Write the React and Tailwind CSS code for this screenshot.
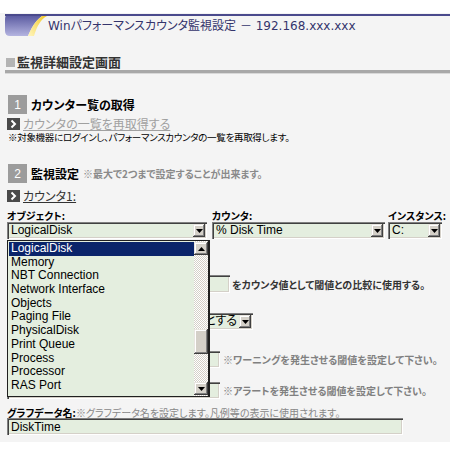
import React from 'react';

const jp = "font-['Noto_Sans_CJK_JP',sans-serif] [font-feature-settings:'palt']";
const latin = "font-['Liberation_Sans','Noto_Sans_CJK_JP',sans-serif] [font-feature-settings:'palt']";
const inset = 'bg-[#e4eedf] shadow-[inset_1px_1px_#808080,inset_2px_2px_#404040,inset_-1px_-1px_#ffffff,inset_-2px_-2px_#d4d0c8]';
const raised = 'bg-[#d4d0c8] shadow-[inset_-1px_-1px_#404040,inset_1px_1px_#e8e6e0,inset_-2px_-2px_#808080,inset_2px_2px_#ffffff]';

const objects = [
    'LogicalDisk', 'Memory', 'NBT Connection', 'Network Interface', 'Objects', 'Paging File',
    'PhysicalDisk', 'Print Queue', 'Process', 'Processor', 'RAS Port',
];

const Arrow = ({ up = false }) => (
    <svg width="7" height="4" viewBox="0 0 7 4">
        <path d={up ? 'M0 4h7L3.5 0z' : 'M0 0h7L3.5 4z'} fill="#000" />
    </svg>
);

const Select = ({ value, className, alignEnd = false }) => (
    <div className={`flex h-[17px] items-stretch p-[2px] ${inset} ${className}`}>
        <span
            className={`flex-1 overflow-hidden whitespace-nowrap pl-[2px] text-[12px] leading-[13px] text-black ${latin} ${alignEnd ? 'pr-[2px] text-right' : ''}`}
        >
            {value}
        </span>
        <span className={`flex w-[12px] items-center justify-center ${raised}`}>
            <Arrow />
        </span>
    </div>
);

const Field = ({ value, className }) => (
    <div className={`h-[17px] px-[4px] pt-[2px] text-[12px] leading-[14px] text-black ${inset} ${latin} ${className}`}>{value}</div>
);

const LinkIcon = () => (
    <svg width="13" height="12" viewBox="0 0 13 12" className="shrink-0">
        <rect width="13" height="12" fill="#4a4a4a" />
        <path d="M4.5 2.5 8 6l-3.5 3.5" stroke="#fff" strokeWidth="2" fill="none" />
    </svg>
);

const StepBox = ({ n }) => (
    <span className="flex h-[19px] w-[19px] items-center justify-center bg-[#9c9c9c] font-['Liberation_Sans',sans-serif] text-[12px] text-white">{n}</span>
);

const Logo = () => (
    <svg width="42" height="22" viewBox="0 0 42 22" className="shrink-0">
        <defs>
            <linearGradient id="lg-body" x1="0" y1="0" x2="0" y2="1">
                <stop offset="0" stopColor="#54549c" />
                <stop offset="1" stopColor="#b4b4e0" />
            </linearGradient>
            <linearGradient id="lg-swoosh" x1="0" y1="1" x2="1" y2="0">
                <stop offset="0" stopColor="#fff6c0" />
                <stop offset="1" stopColor="#f2c61e" />
            </linearGradient>
        </defs>
        <path d="M5 0H42C34 2 28 10 23 22H5Q0 22 0 17V5Q0 0 5 0Z" fill="url(#lg-body)" />
        <path d="M42 0C34 2 28 10 23 22H29C32 12 36 5 42 2Z" fill="url(#lg-swoosh)" />
        <rect width="42" height="2" fill="#4a4a8c" />
    </svg>
);

export default function App() {
    return (
        <div className="relative min-h-[460px] bg-white pt-[13px]">
            <div className="bg-[#f4f4f4] pb-[7px]">
                <header className="flex pl-[5px] pt-[1px]">
                    <Logo />
                    <div className="flex h-[22px] flex-1 items-center border-t-2 border-[#4a4a8c] pl-[1px]">
                        <h1 className="font-['DejaVu_Sans','Noto_Sans_CJK_JP',sans-serif] text-[12px] text-[#34346c] [font-feature-settings:'palt']">
                            Winパフォーマンスカウンタ監視設定 － 192.168.xxx.xxx
                        </h1>
                    </div>
                </header>

                <div className="mt-[18px] flex h-[16px] items-center pl-[6px]">
                    <span className="mr-[2px] h-[9px] w-[9px] bg-[#b4b4b4]" />
                    <h2 className={`text-[13px] font-bold text-[#333] ${jp}`}>監視詳細設定画面</h2>
                </div>
                <div className="ml-[5px] h-[4px] border-t-[3px] border-[#a8a8a8] bg-[#d8d8d8]" />

                <section className="mt-[21px] pl-[8px]">
                    <div className="flex items-center gap-[4px]">
                        <StepBox n="1" />
                        <h3 className={`text-[12px] font-bold text-black ${jp}`}>カウンター覧の取得</h3>
                    </div>
                    <div className="-ml-[1px] mt-[2px] flex h-[15px] items-center gap-[3px]">
                        <LinkIcon />
                        <span className={`text-[12px] leading-[14px] text-[#a0a0a0] underline ${jp}`}>カウンタの一覧を再取得する</span>
                    </div>
                    <p className={`h-[12px] text-[9.5px] leading-[12px] tracking-[-0.3px] text-black ${jp}`}>
                        ※対象機器にログインし、パフォーマンスカウンタの一覧を再取得します。
                    </p>
                </section>

                <section className="mt-[21px] pl-[8px]">
                    <div className="flex items-center gap-[4px]">
                        <StepBox n="2" />
                        <h3 className={`text-[12px] font-bold text-black ${jp}`}>監視設定</h3>
                        <span className={`text-[10px] font-bold text-[#8a8a8a] ${jp}`}>※最大で2つまで設定することが出来ます。</span>
                    </div>
                    <div className="-ml-[1px] mt-[6px] flex h-[14px] items-center gap-[3px]">
                        <LinkIcon />
                        <span className={`text-[12px] leading-[14px] text-[#333] underline ${jp}`}>カウンタ1:</span>
                    </div>
                </section>

                <div className="mt-[7px] flex pl-[7px]">
                    <div className="w-[205px]">
                        <label className={`block h-[12px] text-[10px] font-bold leading-[12px] text-black ${jp}`}>オブジェクト:</label>
                        <Select value="LogicalDisk" className="w-[200px]" />
                    </div>
                    <div className="w-[176px]">
                        <label className={`block h-[12px] text-[10px] font-bold leading-[12px] text-black ${jp}`}>カウンタ:</label>
                        <Select value="% Disk Time" className="w-[173px]" />
                    </div>
                    <div>
                        <label className={`block h-[12px] text-[10px] font-bold leading-[12px] text-black ${jp}`}>インスタンス:</label>
                        <Select value="C:" className="w-[54px]" />
                    </div>
                </div>

                <div className="pl-[7px]">
                    <div className="mt-[36px] flex items-center gap-[2px]">
                        <Field value="" className="h-[18px] w-[223px]" />
                        <span className={`text-[10px] font-bold text-[#333] ${jp}`}>をカウンタ値として閾値との比較に使用する。</span>
                    </div>
                    <Select value="閾値以上で異常とする" alignEnd className="mt-[20px] w-[246px]" />
                    <div className="mt-[21px] flex items-center gap-[3px]">
                        <Field value="" className="w-[213px]" />
                        <span className={`text-[10px] font-bold text-[#808080] ${jp}`}>※ワーニングを発生させる閾値を設定して下さい。</span>
                    </div>
                    <div className="mt-[14px] flex items-center gap-[3px]">
                        <Field value="" className="w-[213px]" />
                        <span className={`text-[10px] font-bold text-[#808080] ${jp}`}>※アラートを発生させる閾値を設定して下さい。</span>
                    </div>

                    <div className="mt-[7px] flex h-[12px] items-center">
                        <label className={`text-[10px] font-bold text-black ${jp}`}>グラフデータ名:</label>
                        <span className={`text-[10px] text-[#888] ${jp}`}>※グラフデータ名を設定します。凡例等の表示に使用されます。</span>
                    </div>
                    <Field value="DiskTime" className="w-[396px]" />
                </div>
            </div>

            {/* open object list */}
            <div className="absolute left-[7px] top-[240px] flex h-[157px] w-[203px] border border-[#202020] border-r-2 bg-[#e4eedf]">
                <ul className={`flex-1 pt-[1px] pl-[1px] text-[12px] text-black ${latin}`}>
                    {objects.map((o, i) => (
                        <li
                            key={o}
                            className={`h-[13.7px] pl-[2px] leading-[13.7px] ${i === 0 ? 'bg-[#0a246a] text-white' : ''}`}
                        >
                            {o}
                        </li>
                    ))}
                </ul>
                <div className="flex w-[14px] flex-col bg-[repeating-conic-gradient(#d4d0c8_0_25%,#ffffff_0_50%)] bg-[length:2px_2px] py-[1px]">
                    <span className={`flex h-[13px] items-center justify-center ${raised}`}>
                        <Arrow up />
                    </span>
                    <span className={`mt-[74px] h-[25px] ${raised}`} />
                    <span className={`mt-auto flex h-[13px] items-center justify-center ${raised}`}>
                        <Arrow />
                    </span>
                </div>
            </div>
        </div>
    );
}
